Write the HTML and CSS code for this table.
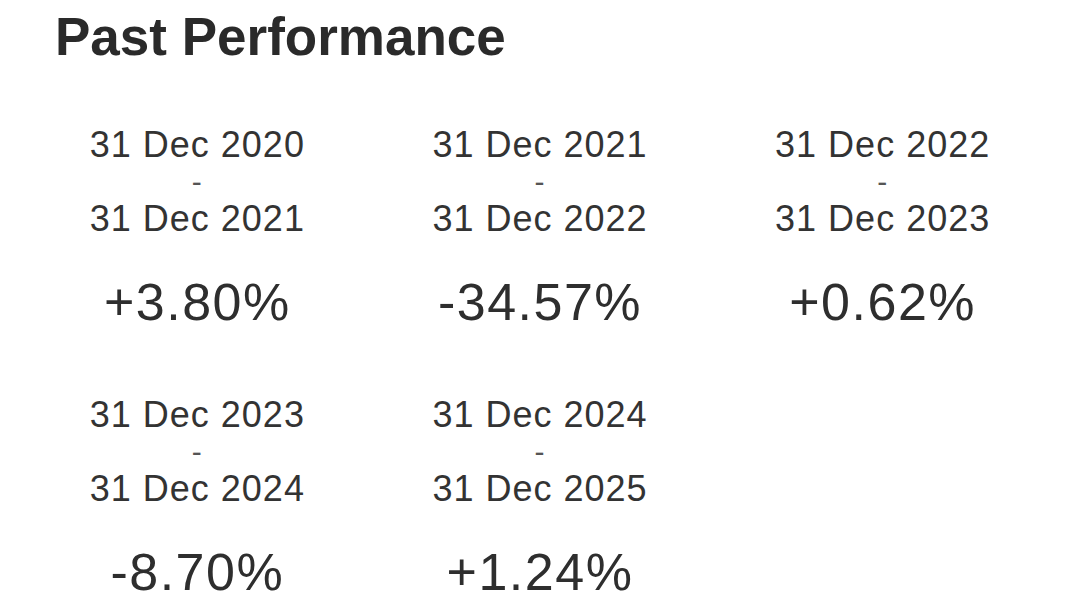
FILE: index.html
```html
<!DOCTYPE html>
<html lang="en">
<head>
<meta charset="utf-8">
<title>Past Performance</title>
<link rel="stylesheet" href="styles.css">
</head>
<body>
<main class="page">
  <h1 class="title">Past Performance</h1>
  <div class="grid">
    <div class="cell">
      <div class="period"><div>31 Dec 2020</div><div class="dash">-</div><div>31 Dec 2021</div></div>
      <div class="value">+3.80%</div>
    </div>
    <div class="cell">
      <div class="period"><div>31 Dec 2021</div><div class="dash">-</div><div>31 Dec 2022</div></div>
      <div class="value">-34.57%</div>
    </div>
    <div class="cell">
      <div class="period"><div>31 Dec 2022</div><div class="dash">-</div><div>31 Dec 2023</div></div>
      <div class="value">+0.62%</div>
    </div>
    <div class="cell">
      <div class="period"><div>31 Dec 2023</div><div class="dash">-</div><div>31 Dec 2024</div></div>
      <div class="value">-8.70%</div>
    </div>
    <div class="cell">
      <div class="period"><div>31 Dec 2024</div><div class="dash">-</div><div>31 Dec 2025</div></div>
      <div class="value">+1.24%</div>
    </div>
  </div>
</main>
</body>
</html>
```

FILE: styles.css
```css
html, body {
  margin: 0;
  padding: 0;
  background: #ffffff;
}

body {
  font-family: "Liberation Sans", Arial, sans-serif;
  color: #2e2e2e;
}

.page {
  padding: 7px 26px 0 26px;
}

.title {
  margin: 0 0 59px 29px;
  font-size: 53px;
  line-height: 60px;
  font-weight: 700;
  color: #2a2a2a;
}

.grid {
  display: grid;
  grid-template-columns: repeat(3, 1fr);
  row-gap: 64px;
}

.cell {
  display: flex;
  flex-direction: column;
  align-items: center;
  text-align: center;
}

.period {
  font-size: 36px;
  line-height: 37px;
  letter-spacing: 1px;
  color: #333333;
}

.dash {
  color: #555555;
  font-size: 30px;
}

.value {
  margin-top: 35px;
  font-size: 52px;
  line-height: 60px;
  letter-spacing: 1.5px;
  color: #2e2e2e;
}
```
